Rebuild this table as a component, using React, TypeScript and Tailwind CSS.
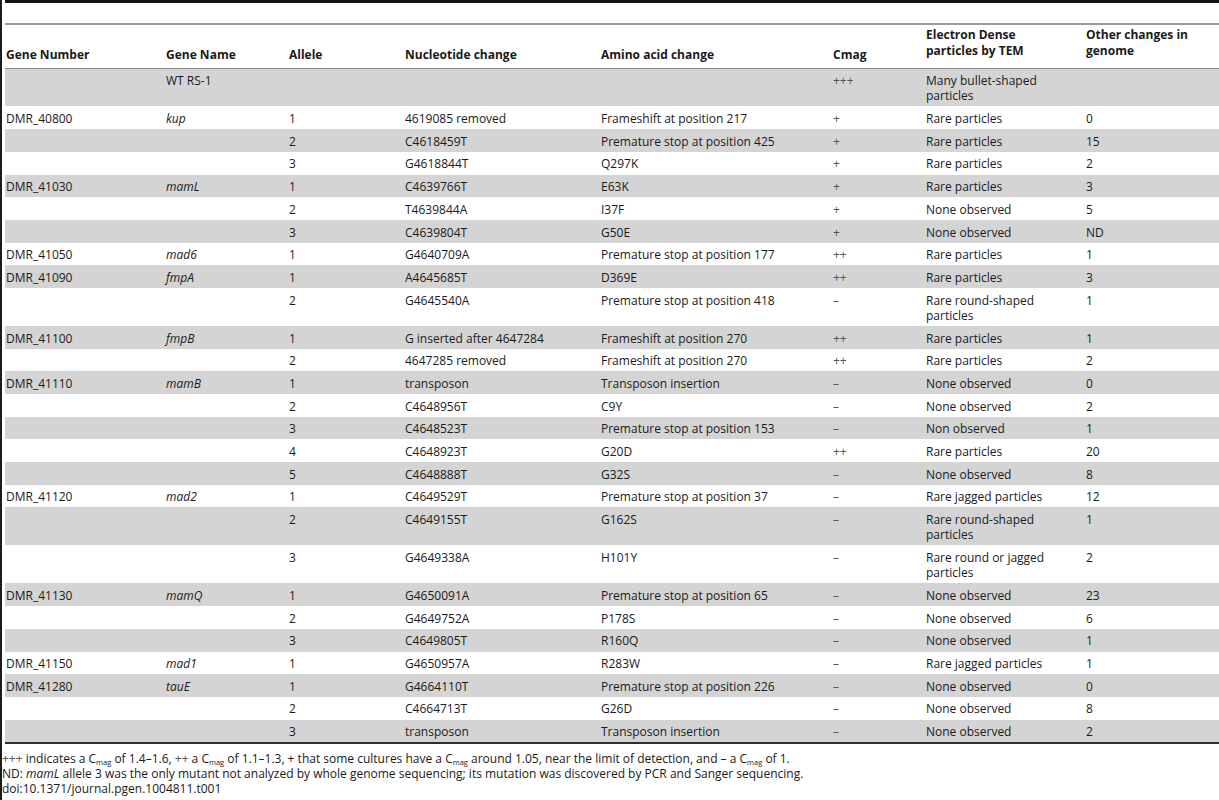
const rows: string[][] = [
  ["", "WT RS-1", "", "", "", "+++", "Many bullet-shaped particles", ""],
  ["DMR_40800", "kup", "1", "4619085 removed", "Frameshift at position 217", "+", "Rare particles", "0"],
  ["", "", "2", "C4618459T", "Premature stop at position 425", "+", "Rare particles", "15"],
  ["", "", "3", "G4618844T", "Q297K", "+", "Rare particles", "2"],
  ["DMR_41030", "mamL", "1", "C4639766T", "E63K", "+", "Rare particles", "3"],
  ["", "", "2", "T4639844A", "I37F", "+", "None observed", "5"],
  ["", "", "3", "C4639804T", "G50E", "+", "None observed", "ND"],
  ["DMR_41050", "mad6", "1", "G4640709A", "Premature stop at position 177", "++", "Rare particles", "1"],
  ["DMR_41090", "fmpA", "1", "A4645685T", "D369E", "++", "Rare particles", "3"],
  ["", "", "2", "G4645540A", "Premature stop at position 418", "–", "Rare round-shaped particles", "1"],
  ["DMR_41100", "fmpB", "1", "G inserted after 4647284", "Frameshift at position 270", "++", "Rare particles", "1"],
  ["", "", "2", "4647285 removed", "Frameshift at position 270", "++", "Rare particles", "2"],
  ["DMR_41110", "mamB", "1", "transposon", "Transposon insertion", "–", "None observed", "0"],
  ["", "", "2", "C4648956T", "C9Y", "–", "None observed", "2"],
  ["", "", "3", "C4648523T", "Premature stop at position 153", "–", "Non observed", "1"],
  ["", "", "4", "C4648923T", "G20D", "++", "Rare particles", "20"],
  ["", "", "5", "C4648888T", "G32S", "–", "None observed", "8"],
  ["DMR_41120", "mad2", "1", "C4649529T", "Premature stop at position 37", "–", "Rare jagged particles", "12"],
  ["", "", "2", "C4649155T", "G162S", "–", "Rare round-shaped particles", "1"],
  ["", "", "3", "G4649338A", "H101Y", "–", "Rare round or jagged particles", "2"],
  ["DMR_41130", "mamQ", "1", "G4650091A", "Premature stop at position 65", "–", "None observed", "23"],
  ["", "", "2", "G4649752A", "P178S", "–", "None observed", "6"],
  ["", "", "3", "C4649805T", "R160Q", "–", "None observed", "1"],
  ["DMR_41150", "mad1", "1", "G4650957A", "R283W", "–", "Rare jagged particles", "1"],
  ["DMR_41280", "tauE", "1", "G4664110T", "Premature stop at position 226", "–", "None observed", "0"],
  ["", "", "2", "C4664713T", "G26D", "–", "None observed", "8"],
  ["", "", "3", "transposon", "Transposon insertion", "–", "None observed", "2"],
]

const widths = [160, 123, 116, 196, 232, 93, 160, 134]

const headers: string[][] = [
  ["Gene Number"],
  ["Gene Name"],
  ["Allele"],
  ["Nucleotide change"],
  ["Amino acid change"],
  ["Cmag"],
  ["Electron Dense", "particles by TEM"],
  ["Other changes in", "genome"],
]

// C with a "mag" subscript, kept from pushing the line apart
function Mag() {
  return (
    <>
      C<span className="relative top-[2px] text-[7.5px] leading-none">mag</span>
    </>
  )
}

export default function App() {
  return (
    <div
      className="min-h-screen border-l-2 border-[#1c1c1c] bg-white text-[#1a1a1a]"
      style={{ fontFamily: '"Open Sans", "Noto Sans", sans-serif' }}
    >
      <div className="ml-[3px] h-[3px] bg-[#141414]" />
      <div className="ml-[3px] mt-[20px] h-[2px] bg-[#9a9a9a]" />

      <table className="ml-[3px] w-[1214px] table-fixed border-collapse text-[12px]">
        <colgroup>
          {widths.map((w, i) => (
            <col key={i} style={{ width: w }} />
          ))}
        </colgroup>
        <thead>
          <tr className="h-[43px] border-b border-[#8c8c8c]">
            {headers.map((h, i) => (
              <th
                key={i}
                className={`pl-[1px] pr-2 text-left align-bottom font-bold leading-[16px] ${
                  h.length > 1 ? "pb-[9px]" : "pb-[5px]"
                }`}
              >
                {h.map((l, j) => (
                  <div key={j}>{l}</div>
                ))}
              </th>
            ))}
          </tr>
        </thead>
        <tbody>
          {rows.map((r, i) => (
            <tr key={i} className={i % 2 === 0 ? "bg-[#d4d4d4]" : "bg-white"}>
              {r.map((c, j) => (
                <td
                  key={j}
                  className={`pl-[1px] pr-[9px] pt-[4.6px] pb-[2.8px] align-top leading-[15.3px] ${
                    j === 1 && i > 0 ? "italic" : ""
                  } ${j === 5 ? "text-[#555]" : ""}`}
                >
                  {c}
                </td>
              ))}
            </tr>
          ))}
        </tbody>
      </table>
      <div className="ml-[3px] h-[2px] bg-[#2e2e2e]" />

      <div className="pt-[7px] text-[12px] leading-[15px]">
        <p>
          <span className="text-[#555]">+++</span> indicates a <Mag /> of 1.4–1.6,{" "}
          <span className="text-[#555]">++</span> a <Mag /> of 1.1–1.3, + that some cultures have a <Mag />{" "}
          around 1.05, near the limit of detection, and – a <Mag /> of 1.
        </p>
        <p>
          ND: <i>mamL</i> allele 3 was the only mutant not analyzed by whole genome sequencing; its mutation
          was discovered by PCR and Sanger sequencing.
        </p>
        <p>doi:10.1371/journal.pgen.1004811.t001</p>
      </div>
    </div>
  )
}
